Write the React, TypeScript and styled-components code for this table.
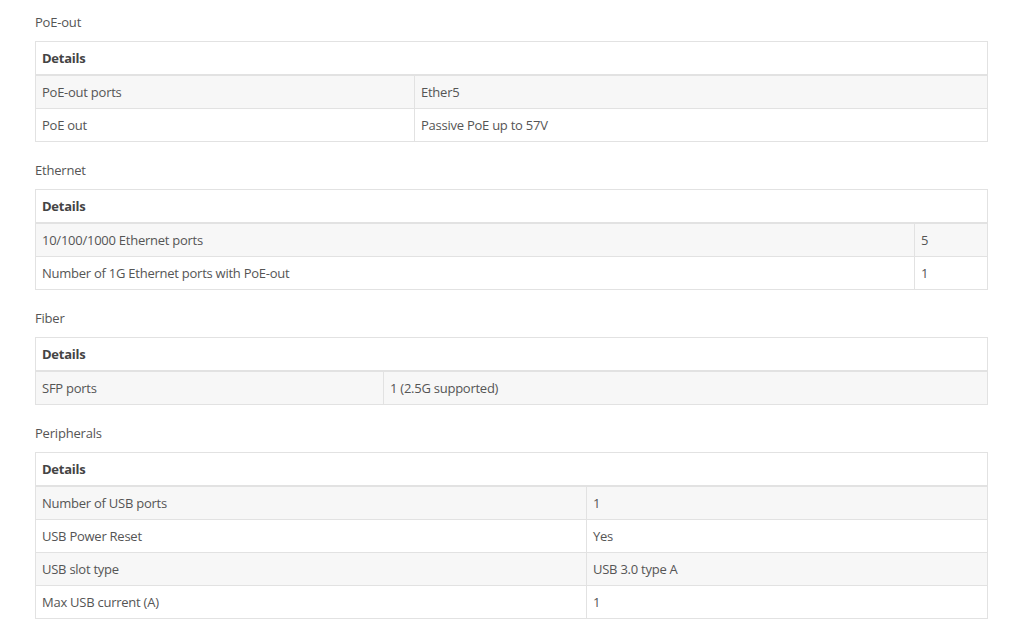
import React from "react";
import styled, { createGlobalStyle } from "styled-components";

const Global = createGlobalStyle`
  html, body { margin: 0; padding: 0; background: #fff; }
  body { font-family: "Open Sans", "Noto Sans", Arial, sans-serif; color: #555; }
`;

const Page = styled.div`
  padding: 14px 36px 0 35px;
  width: 953px;
`;

const Section = styled.section`
  margin-bottom: 20px;
`;

const Title = styled.div`
  font-size: 13px;
  line-height: 17px;
  letter-spacing: -0.2px;
  color: #555;
  margin-bottom: 10px;
`;

const Table = styled.table`
  width: 100%;
  border-collapse: collapse;
  table-layout: fixed;
  font-size: 13px;
  line-height: 16px;
  letter-spacing: -0.25px;
`;

const Th = styled.th`
  text-align: left;
  font-weight: 700;
  color: #444;
  padding: 8px 6px;
  border: 1px solid #e2e2e2;
  border-bottom: 2px solid #e2e2e2;
`;

const Tr = styled.tr<{ $striped: boolean }>`
  background: ${(p) => (p.$striped ? "#f7f7f7" : "#fff")};
`;

const Td = styled.td`
  padding: 8px 6px;
  border: 1px solid #e2e2e2;
  color: #555;
`;

type Spec = { title: string; first: number; rows: [string, string][] };

const specs: Spec[] = [
  {
    title: "PoE-out",
    first: 379,
    rows: [
      ["PoE-out ports", "Ether5"],
      ["PoE out", "Passive PoE up to 57V"],
    ],
  },
  {
    title: "Ethernet",
    first: 879,
    rows: [
      ["10/100/1000 Ethernet ports", "5"],
      ["Number of 1G Ethernet ports with PoE-out", "1"],
    ],
  },
  {
    title: "Fiber",
    first: 348,
    rows: [["SFP ports", "1 (2.5G supported)"]],
  },
  {
    title: "Peripherals",
    first: 551,
    rows: [
      ["Number of USB ports", "1"],
      ["USB Power Reset", "Yes"],
      ["USB slot type", "USB 3.0 type A"],
      ["Max USB current (A)", "1"],
    ],
  },
];

export default function App() {
  return (
    <Page>
      <Global />
      {specs.map((s) => (
        <Section key={s.title}>
          <Title>{s.title}</Title>
          <Table>
            <colgroup>
              <col style={{ width: s.first }} />
              <col />
            </colgroup>
            <thead>
              <tr>
                <Th colSpan={2}>Details</Th>
              </tr>
            </thead>
            <tbody>
              {s.rows.map(([k, v], i) => (
                <Tr key={k} $striped={i % 2 === 0}>
                  <Td>{k}</Td>
                  <Td>{v}</Td>
                </Tr>
              ))}
            </tbody>
          </Table>
        </Section>
      ))}
    </Page>
  );
}
